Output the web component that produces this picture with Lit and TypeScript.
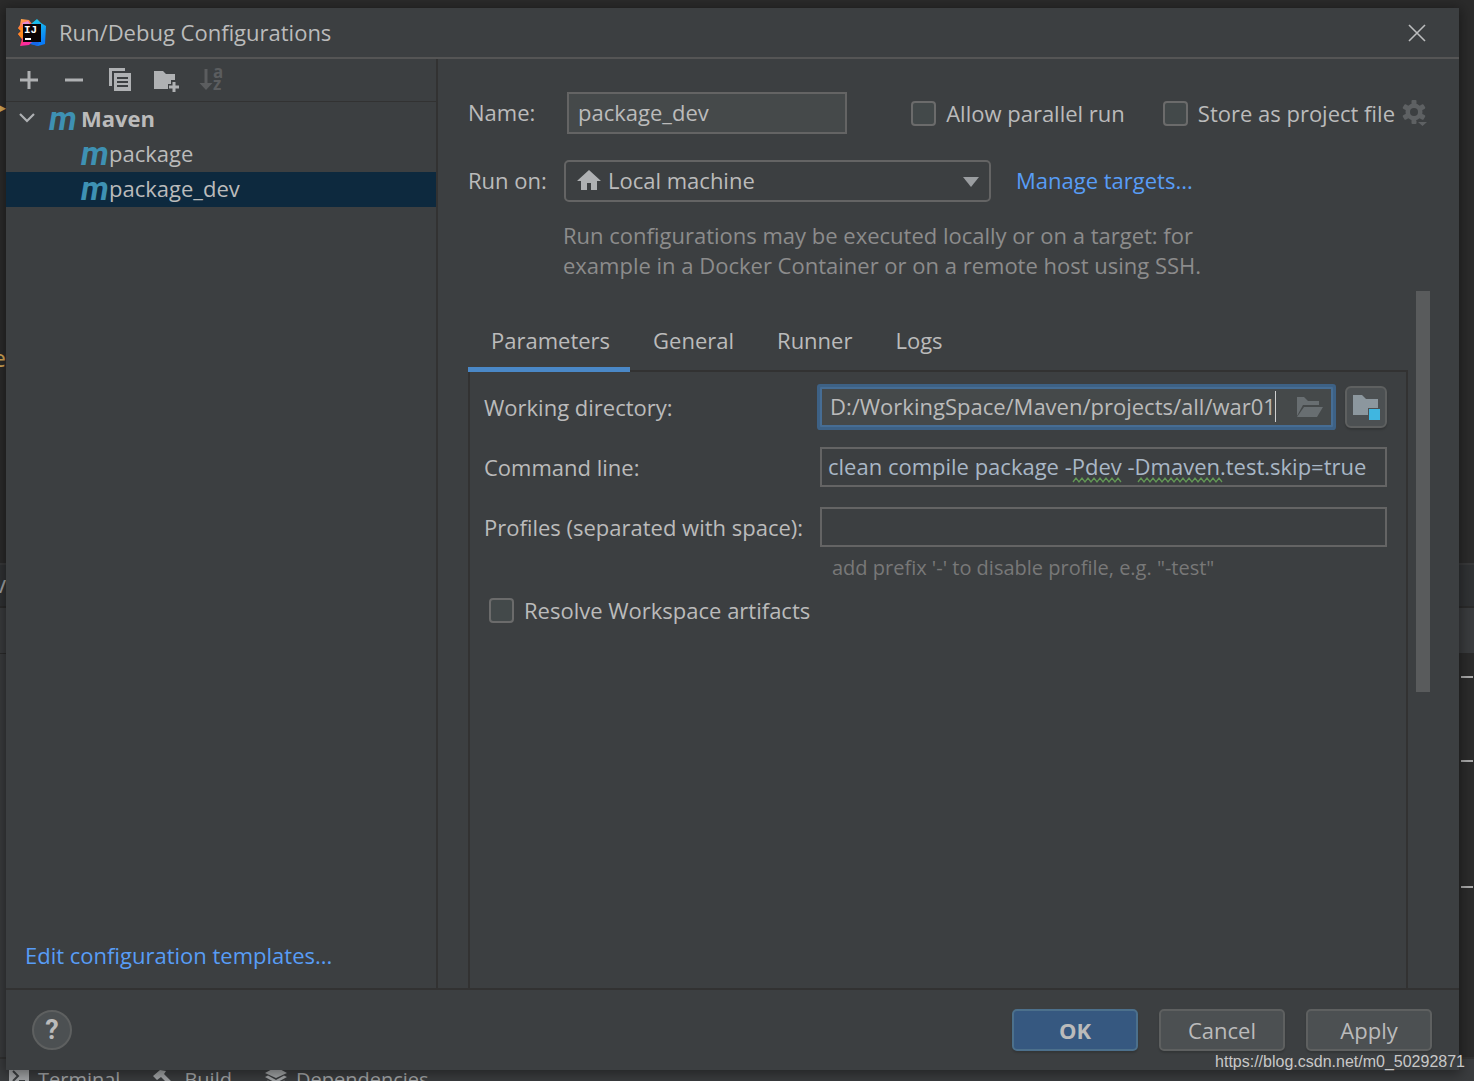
import { LitElement, html, css, svg } from "lit";
import { customElement, state } from "lit/decorators.js";
import { classMap } from "lit/directives/class-map.js";

const icons = {
  logo: html`<svg class="logo" viewBox="0 0 28 28" width="28" height="28" aria-hidden="true">
    <defs>
      <linearGradient id="warm" x1="0" y1="0" x2="0.3" y2="1">
        <stop offset="0" stop-color="#fdb64d" />
        <stop offset="0.45" stop-color="#ff5f4a" />
        <stop offset="1" stop-color="#fe2d7d" />
      </linearGradient>
      <linearGradient id="cool" x1="0" y1="0" x2="0.3" y2="1">
        <stop offset="0" stop-color="#1fd0e6" />
        <stop offset="1" stop-color="#087cfa" />
      </linearGradient>
    </defs>
    <path d="M3 0 L11 1 L14 5 L12 20 L8 24 L2 27 L4 20 L0 15 L3 12 L0 9 L2 6Z" fill="url(#warm)" />
    <path d="M0 9 L3 12 L0 15 L4 20 L7 14 L5 8Z" fill="#ff8a1f" />
    <path d="M13 5 L19 0 L23 4 L28 7 L27 25 L20 27 L10 24Z" fill="url(#cool)" />
    <path d="M2 27 L8 21 L14 23 L11 26Z" fill="#fe2ba0" />
    <path d="M4 4 L10 2 L12 5 L5 7Z" fill="#e58ad0" />
    <path d="M20 27 L12 25 L22 19Z" fill="#1667e8" />
    <rect x="5" y="5" width="18" height="18" fill="#0a0304" />
    <text class="logo-text" x="6" y="14">IJ</text>
    <rect x="7" y="19" width="6" height="2" fill="#fff" />
  </svg>`,
  close: html`<svg viewBox="0 0 18 18" width="18" height="18" aria-hidden="true">
    <path d="M1 1 L17 17 M17 1 L1 17" fill="none" stroke="#bcbdbe" stroke-width="1.600" />
  </svg>`,
  add: html`<svg viewBox="0 0 24 24" width="24" height="24" aria-hidden="true">
    <path d="M13 3 V21 M4 12 H22" fill="none" stroke="#afb1b3" stroke-width="3" />
  </svg>`,
  remove: html`<svg viewBox="0 0 24 24" width="24" height="24" aria-hidden="true">
    <path d="M3 12 H21" fill="none" stroke="#afb1b3" stroke-width="3" />
  </svg>`,
  copy: html`<svg viewBox="0 0 24 24" width="24" height="24" aria-hidden="true">
    <path d="M1 0 H17 V3 H4 V18 H1Z" fill="#afb1b3" />
    <path
      d="M6 5 H23 V23 H6Z M9 9 V11 H20 V9Z M9 13 V15 H20 V13Z M9 17 V19 H20 V17Z"
      fill="#afb1b3"
      fill-rule="evenodd"
    />
  </svg>`,
  folderAdd: html`<svg viewBox="0 0 24 24" width="24" height="24" aria-hidden="true">
    <path d="M0 3 H9 L12 6 H21 V12 H17 V16 H14 V21 H0Z" fill="#afb1b3" />
    <path d="M20 14 V24 M15 19 H25" fill="none" stroke="#afb1b3" stroke-width="3" />
  </svg>`,
  sort: html`<svg viewBox="0 0 24 24" width="24" height="24" aria-hidden="true">
    <path d="M4.500 1 H7.500 V15 H12.500 L6 22 L-0.500 15 H4.500Z" fill="#5b5d5f" />
    <text class="sort-text" x="13" y="10">a</text>
    <text class="sort-text" x="13" y="22">z</text>
  </svg>`,
  chevron: html`<svg viewBox="0 0 16 10" width="16" height="10" aria-hidden="true">
    <path d="M1 1 L8 8 L15 1" fill="none" stroke="#afb1b3" stroke-width="2.200" />
  </svg>`,
  home: html`<svg class="home" viewBox="0 0 24 20" width="24" height="20" aria-hidden="true">
    <path d="M12 0 L24 11 H20 V20 H14 V13 H10 V20 H4 V11 H0Z" fill="#afb1b3" />
  </svg>`,
  arrow: html`<svg class="arrow" viewBox="0 0 16 10" width="16" height="10" aria-hidden="true">
    <path d="M0 0 H16 L8 10Z" fill="#9a9da0" />
  </svg>`,
  gear: html`<svg viewBox="0 0 26 26" width="26" height="26" aria-hidden="true">
    <g fill="#5e6163">
      ${[0, 60, 120].map(
        (a) => svg`<rect x="8.500" y="0" width="5" height="24" rx="1" transform="rotate(${a} 11 12)" />`,
      )}
      <circle cx="11" cy="12" r="8.500" />
    </g>
    <circle cx="11" cy="12" r="4" fill="#3c3f41" />
    <path d="M13 20 H26 L20 27Z" fill="#3c3f41" />
    <path d="M15 22 H24 L19.500 26Z" fill="#5e6163" />
  </svg>`,
  openFolder: html`<svg viewBox="0 0 28 22" width="28" height="22" aria-hidden="true">
    <path d="M1 1 H8 L12 5 H23 V9 H7 L1 20Z" fill="#686e71" />
    <path d="M8 11 H27 L21 21 H1Z" fill="#686e71" />
  </svg>`,
  moduleFolder: html`<svg viewBox="0 0 28 26" width="28" height="26" aria-hidden="true">
    <path d="M1 1 H10 L14 5 H26 V14 H16 V21 H1Z" fill="#8c979e" />
    <rect x="17" y="15" width="11" height="11" fill="#40b6e0" />
  </svg>`,
  terminal: html`<svg viewBox="0 0 20 18" width="20" height="18" aria-hidden="true">
    <path d="M0 0 H20 V18 H0Z" fill="#a3a5a7" />
    <path d="M4 1 L9 6 L4 11 M10 11 H16" fill="none" stroke="#3c3f41" stroke-width="2" />
  </svg>`,
  hammer: html`<svg viewBox="0 0 22 18" width="22" height="18" aria-hidden="true">
    <path d="M0 6 L7 0 L13 1 L11 4 L22 15 L19 18 L8 7 L4 10Z" fill="#a3a5a7" />
  </svg>`,
  layers: html`<svg viewBox="0 0 22 18" width="22" height="18" aria-hidden="true">
    <path d="M11 -3 L22 3 L11 8 L0 3Z M0 7 L3 5.500 L11 10 L19 5.500 L22 7 L11 13Z M0 12 L3 10.500 L11 15 L19 10.500 L22 12 L11 18Z" fill="#a3a5a7" />
  </svg>`,
};

/** Zigzag spelling mark of the given width. */
const wave = (width: number) => {
  let d = "M0 5";
  for (let x = 3, up = true; x <= width; x += 3, up = !up) d += ` L${x} ${up ? 1 : 5}`;
  return html`<svg width=${width} height="6" aria-hidden="true">
    <path d=${d} fill="none" stroke="#629755" stroke-width="1.300" />
  </svg>`;
};

@customElement("ide-backdrop")
export class IdeBackdrop extends LitElement {
  static styles = css`
    :host {
      display: grid;
      grid-template-rows: 562fr 43fr 47fr 404fr 24px;
      position: relative;
      overflow: hidden;
      height: 100vh;
      background: #2b2b2b;
      color: #a3a5a7;
      font: 20px/30px "Open Sans", "Noto Sans", sans-serif;
    }
    .tabs {
      background: #303234;
      border-top: 2px solid #38393a;
    }
    .head {
      background: #3a3c3e;
      border-top: 2px solid #2b2b2b;
    }
    .body {
      display: grid;
      grid-template-columns: 1fr 1fr;
      border-top: 1px solid #2b2b2b;
    }
    .tree {
      background: #3a3c3e;
    }
    .bar {
      display: flex;
      align-items: flex-start;
      gap: 33px;
      padding: 6px 9px 0;
      border-top: 2px solid #323232;
      background: #3a3c3e;
    }
    .tool {
      display: flex;
      gap: 9px;
      flex: none;
    }
    .tool svg {
      margin-top: 5px;
    }
    .code {
      position: absolute;
      right: calc(100% - 6px);
      color: #d9a857;
      font-size: 24px;
    }
    .c1 {
      top: 92px;
      font-size: 16px;
    }
    .c2 {
      top: 343px;
    }
    .c3 {
      top: 569px;
      color: #a3a5a7;
    }
    .dash {
      position: absolute;
      right: 1px;
      width: 12px;
      height: 2px;
      background: #aaaaaa;
    }
    .d1 {
      top: 676px;
    }
    .d2 {
      top: 760px;
    }
    .d3 {
      top: 886px;
    }
  `;
  render() {
    return html`
      <div></div>
      <div class="tabs"></div>
      <div class="head"></div>
      <div class="body"><div class="tree"></div></div>
      <div class="bar">
        <span class="tool">${icons.terminal}Terminal</span>
        <span class="tool">${icons.hammer}Build</span>
        <span class="tool">${icons.layers}Dependencies</span>
      </div>
      <span class="code c1">▸</span>
      <span class="code c2">e</span>
      <span class="code c3">v</span>
      <i class="dash d1"></i><i class="dash d2"></i><i class="dash d3"></i>
    `;
  }
}

@customElement("app-root")
export class AppRoot extends LitElement {
  static styles = css`
    :host {
      display: grid;
      min-height: 100vh;
      color: #bbbbbb;
      font: 22px/30px "Open Sans", "Noto Sans", sans-serif;
    }
    * {
      box-sizing: border-box;
    }
    button,
    input,
    select {
      margin: 0;
      font: inherit;
      color: inherit;
      outline: none;
    }
    button {
      padding: 0;
      border: 0;
      background: none;
    }
    svg {
      display: block;
      flex: none;
      overflow: visible;
    }
    a {
      color: #589df6;
      text-decoration: none;
    }
    ide-backdrop,
    .dialog {
      grid-area: 1 / 1;
      min-width: 0;
    }
    .dialog {
      position: relative;
      display: flex;
      flex-direction: column;
      margin: 8px 15px 11px 6px;
      background: #3c3f41;
      box-shadow: 0 2px 12px 2px rgba(0, 0, 0, 0.4);
    }
    .title {
      display: flex;
      align-items: center;
      gap: 13px;
      height: 51px;
      padding: 0 33px 0 12px;
      border-bottom: 2px solid #555555;
    }
    .title h1 {
      flex: 1;
      margin: 0;
      padding-bottom: 2px;
      font-size: 22px;
      font-weight: 400;
    }
    .logo-text {
      fill: #ffffff;
      font: 700 11px "Liberation Mono", monospace;
    }
    .sort-text {
      fill: #5b5d5f;
      font: 700 17px "Open Sans", sans-serif;
    }
    .content {
      flex: 1;
      display: flex;
      min-height: 0;
    }
    .side {
      display: flex;
      flex-direction: column;
      flex: none;
      width: 432px;
      border-right: 2px solid #323232;
    }
    .toolbar {
      display: flex;
      align-items: center;
      gap: 22px;
      height: 43px;
      padding-left: 10px;
      border-bottom: 1px solid #323232;
    }
    .toolbar button {
      width: 24px;
    }
    .tree {
      flex: 1;
      margin: 0;
      padding: 0;
      list-style: none;
    }
    .node {
      display: flex;
      align-items: center;
      width: 100%;
      height: 35px;
      text-align: left;
      padding: 0 0 4px 75px;
    }
    .node.group {
      padding-left: 13px;
      font-weight: 700;
    }
    .node.group .m {
      margin: 0 4px 0 14px;
    }
    .node.selected {
      background: #0d293e;
    }
    .m {
      flex: none;
      width: 28px;
      padding-top: 2px;
      color: #3e91b3;
      font: italic 700 33px/24px Roboto, sans-serif;
    }
    .templates {
      padding: 0 19px 18px;
    }
    .main {
      flex: 1;
      display: flex;
      flex-direction: column;
      min-width: 0;
      padding: 33px 29px 0 30px;
    }
    .row {
      display: flex;
      align-items: center;
      height: 42px;
      padding-right: 1px;
    }
    .row + .row {
      margin-top: 26px;
    }
    .row > .label {
      flex: none;
      width: 96px;
      padding-bottom: 2px;
    }
    .row > a {
      padding-bottom: 2px;
    }
    .field {
      width: 100%;
      height: 40px;
      padding: 0 6px 2px;
      border: 2px solid #646464;
      background: transparent;
    }
    .name {
      width: 280px;
      height: 42px;
      margin-left: 3px;
      padding-left: 9px;
      background: #45494a;
    }
    .check {
      display: flex;
      align-items: center;
      gap: 10px;
      white-space: nowrap;
    }
    .check input {
      appearance: none;
      width: 25px;
      height: 25px;
      border: 2px solid #6b6b6b;
      border-radius: 4px;
      background: #43494a;
    }
    .push {
      margin-left: auto;
    }
    .gap {
      margin: 0 8px 0 38px;
    }
    .combo {
      position: relative;
      width: 427px;
      margin-right: 25px;
    }
    .combo select {
      appearance: none;
      width: 100%;
      height: 42px;
      padding: 0 40px 2px 42px;
      border: 2px solid #646464;
      border-radius: 5px;
      background: transparent;
    }
    .home {
      position: absolute;
      left: 13px;
      top: 10px;
    }
    .arrow {
      position: absolute;
      right: 12px;
      top: 17px;
    }
    .note {
      max-width: 660px;
      margin: 18px 0 11px 95px;
      color: #8c8c8c;
    }
    .scroll {
      flex: 1;
      display: flex;
      gap: 8px;
    }
    .thumb {
      width: 14px;
      height: 401px;
      background: #595b5c;
    }
    .pane {
      flex: 1;
      display: flex;
      flex-direction: column;
      min-width: 0;
      padding-top: 21px;
    }
    .tabs {
      display: flex;
      height: 60px;
      border-bottom: 2px solid #323232;
    }
    .tab {
      position: relative;
      padding: 0 20px 2px 23px;
    }
    .tab.active::after {
      content: "";
      position: absolute;
      inset: auto 0 -2px;
      height: 5px;
      background: #4a88c7;
    }
    .panel {
      flex: 1;
      padding: 14px 19px 0 14px;
      border: solid #323232;
      border-width: 0 2px;
    }
    .form {
      display: grid;
      grid-template-columns: 336px minmax(0, 1fr);
      grid-auto-rows: 42px;
      row-gap: 18px;
      align-items: center;
    }
    .pair {
      display: flex;
      align-items: center;
      gap: 12px;
    }
    .wrap {
      position: relative;
      flex: 1;
      min-width: 0;
    }
    .focused {
      display: flex;
      align-items: center;
      height: 40px;
      padding-right: 7px;
      border: 2px solid #466d94;
      border-radius: 1px;
      background: #45494a;
      box-shadow: 0 0 0 3px #3d6185;
    }
    .focused .field {
      flex: 1;
      min-width: 0;
      height: 36px;
      padding: 0 0 2px 8px;
      border: 0;
    }
    .caret {
      position: absolute;
      left: 453px;
      top: 2px;
      width: 1px;
      height: 31px;
      background: #d0d0d0;
    }
    .browse {
      display: grid;
      place-items: center;
      width: 42px;
      height: 42px;
      border: 2px solid #5e6060;
      border-radius: 6px;
      background: #4c5052;
      box-shadow: 0 2px 2px rgba(0, 0, 0, 0.15);
    }
    .command {
      color: #a9b7c6;
    }
    .typo {
      position: absolute;
      top: 30px;
    }
    .t1 {
      left: 253px;
    }
    .t2 {
      left: 318px;
    }
    .hint {
      margin: 5px 0 12px 348px;
      color: #787878;
      font-size: 20px;
    }
    .resolve {
      padding-left: 5px;
    }
    .footer {
      display: flex;
      align-items: center;
      gap: 21px;
      height: 82px;
      padding: 0 27px 0 26px;
      border-top: 2px solid #323232;
    }
    .help {
      width: 40px;
      height: 40px;
      margin-right: auto;
      border: 2px solid #5e6060;
      border-radius: 50%;
      background: #4c5052;
      font: 700 27px/34px Roboto, sans-serif;
    }
    .btn {
      width: 126px;
      height: 42px;
      border: 2px solid #5e6060;
      border-radius: 5px;
      background: #4c5052;
      box-shadow: 0 2px 2px rgba(0, 0, 0, 0.15);
    }
    .btn.primary {
      border-color: #4c708c;
      background: #365880;
      font-weight: 700;
    }
    .mark {
      position: absolute;
      right: -6px;
      bottom: -2px;
      color: #c8c8c8;
      font: 16px/20px "Liberation Sans", sans-serif;
    }
  `;

  @state() private tab = "Parameters";
  @state() private selected = "package_dev";

  render() {
    return html`
      <ide-backdrop></ide-backdrop>
      <section class="dialog" role="dialog" aria-labelledby="title">
        <header class="title">
          ${icons.logo}
          <h1 id="title">Run/Debug Configurations</h1>
          <button aria-label="Close">${icons.close}</button>
        </header>
        <div class="content">${this.renderSide()} ${this.renderMain()}</div>
        <footer class="footer">
          <button class="help" aria-label="Help">?</button>
          <button class="btn primary">OK</button>
          <button class="btn">Cancel</button>
          <button class="btn">Apply</button>
        </footer>
        <span class="mark">https://blog.csdn.net/m0_50292871</span>
      </section>
    `;
  }

  private renderSide() {
    return html`<nav class="side">
      <div class="toolbar">
        <button aria-label="Add">${icons.add}</button>
        <button aria-label="Remove">${icons.remove}</button>
        <button aria-label="Copy">${icons.copy}</button>
        <button aria-label="New folder">${icons.folderAdd}</button>
        <button aria-label="Sort" disabled>${icons.sort}</button>
      </div>
      <ul class="tree">
        <li>
          <button class="node group">${icons.chevron}<span class="m" aria-hidden="true">m</span>Maven</button>
        </li>
        ${["package", "package_dev"].map(
          (name) => html`<li>
            <button
              class=${classMap({ node: true, selected: name === this.selected })}
              @click=${() => (this.selected = name)}
            >
              <span class="m" aria-hidden="true">m</span>${name}
            </button>
          </li>`,
        )}
      </ul>
      <div class="templates"><a href="#">Edit configuration templates...</a></div>
    </nav>`;
  }

  private renderMain() {
    return html`<main class="main">
      <div class="row">
        <label class="label" for="name">Name:</label>
        <input id="name" class="field name" .value=${"package_dev"} />
        <label class="check push"><input type="checkbox" />Allow parallel run</label>
        <label class="check gap"><input type="checkbox" />Store as project file</label>
        <button aria-label="Storage options">${icons.gear}</button>
      </div>
      <div class="row">
        <label class="label" for="target">Run on:</label>
        <div class="combo">
          <select id="target">
            <option>Local machine</option>
          </select>
          ${icons.home}${icons.arrow}
        </div>
        <a href="#">Manage targets...</a>
      </div>
      <p class="note">
        Run configurations may be executed locally or on a target: for<br />example in a Docker Container or on a
        remote host using SSH.
      </p>
      <div class="scroll">
        <div class="pane">
          <div class="tabs" role="tablist">
            ${["Parameters", "General", "Runner", "Logs"].map(
              (name) => html`<button
                role="tab"
                aria-selected=${name === this.tab}
                class=${classMap({ tab: true, active: name === this.tab })}
                @click=${() => (this.tab = name)}
              >
                ${name}
              </button>`,
            )}
          </div>
          <div class="panel" role="tabpanel">
            <div class="form">
              <label for="dir">Working directory:</label>
              <div class="pair">
                <div class="wrap focused">
                  <input id="dir" class="field" .value=${"D:/WorkingSpace/Maven/projects/all/war01"} />
                  <i class="caret"></i>
                  <button aria-label="Browse">${icons.openFolder}</button>
                </div>
                <button class="browse" aria-label="Select Maven project">${icons.moduleFolder}</button>
              </div>
              <label for="cmd">Command line:</label>
              <div class="wrap">
                <input
                  id="cmd"
                  class="field command"
                  spellcheck="false"
                  .value=${"clean compile package -Pdev -Dmaven.test.skip=true"}
                />
                <span class="typo t1">${wave(49)}</span>
                <span class="typo t2">${wave(84)}</span>
              </div>
              <label for="profiles">Profiles (separated with space):</label>
              <div class="wrap"><input id="profiles" class="field" /></div>
            </div>
            <p class="hint">add prefix '-' to disable profile, e.g. "-test"</p>
            <label class="check resolve"><input type="checkbox" />Resolve Workspace artifacts</label>
          </div>
        </div>
        <div class="thumb"></div>
      </div>
    </main>`;
  }
}
